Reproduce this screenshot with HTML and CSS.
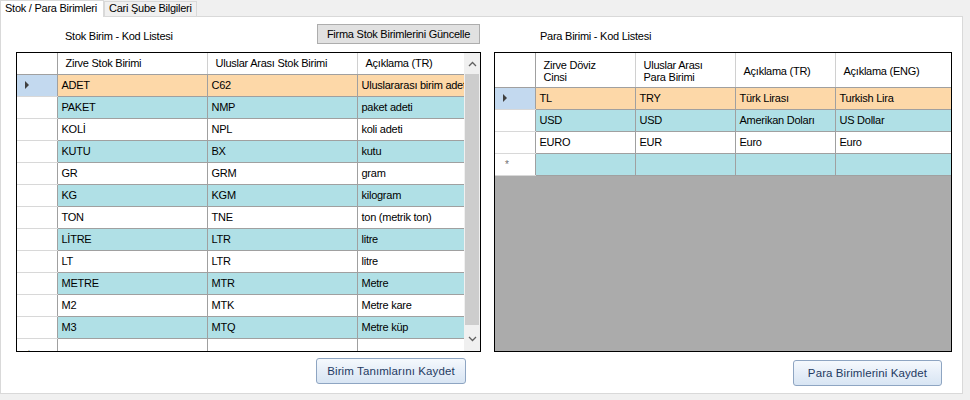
FILE: index.html
```html
<!DOCTYPE html>
<html>
<head>
<meta charset="utf-8">
<link rel="stylesheet" href="styles.css">
</head>
<body>
<div class="tabs">
  <div class="tab active">Stok / Para Birimleri</div>
  <div class="tab">Cari Şube Bilgileri</div>
</div>
<div class="page">
  <div class="col col-left">
    <div class="col-head">
      <span class="label label-left">Stok Birim - Kod Listesi</span>
      <button class="btn-flat">Firma Stok Birimlerini Güncelle</button>
    </div>
    <div class="grid grid-left">
      <div class="grid-body">
        <table class="tbl">
          <colgroup><col class="c-rh"><col class="c-150"><col class="c-150"><col></colgroup>
          <thead>
            <tr class="hrow"><th class="rh"></th><th>Zirve Stok Birimi</th><th>Uluslar Arası Stok Birimi</th><th>Açıklama (TR)</th></tr>
          </thead>
          <tbody>
            <tr class="sel"><td class="rh"><span class="tri"></span></td><td>ADET</td><td>C62</td><td>Uluslararası birim adet</td></tr>
            <tr class="blue"><td class="rh"></td><td>PAKET</td><td>NMP</td><td>paket adeti</td></tr>
            <tr><td class="rh"></td><td>KOLİ</td><td>NPL</td><td>koli adeti</td></tr>
            <tr class="blue"><td class="rh"></td><td>KUTU</td><td>BX</td><td>kutu</td></tr>
            <tr><td class="rh"></td><td>GR</td><td>GRM</td><td>gram</td></tr>
            <tr class="blue"><td class="rh"></td><td>KG</td><td>KGM</td><td>kilogram</td></tr>
            <tr><td class="rh"></td><td>TON</td><td>TNE</td><td>ton (metrik ton)</td></tr>
            <tr class="blue"><td class="rh"></td><td>LİTRE</td><td>LTR</td><td>litre</td></tr>
            <tr><td class="rh"></td><td>LT</td><td>LTR</td><td>litre</td></tr>
            <tr class="blue"><td class="rh"></td><td>METRE</td><td>MTR</td><td>Metre</td></tr>
            <tr><td class="rh"></td><td>M2</td><td>MTK</td><td>Metre kare</td></tr>
            <tr class="blue"><td class="rh"></td><td>M3</td><td>MTQ</td><td>Metre küp</td></tr>
            <tr><td class="rh star">*</td><td></td><td></td><td></td></tr>
          </tbody>
        </table>
      </div>
      <div class="vscroll">
        <div class="arrow arrow-up"><svg width="9" height="6" viewBox="0 0 9 6"><polyline points="1,5 4.5,1.5 8,5" fill="none" stroke="#606060" stroke-width="1.3"/></svg></div>
        <div class="thumb"></div>
        <div class="track"></div>
        <div class="arrow arrow-down"><svg width="9" height="6" viewBox="0 0 9 6"><polyline points="1,1 4.5,4.5 8,1" fill="none" stroke="#606060" stroke-width="1.3"/></svg></div>
      </div>
    </div>
    <div class="col-foot foot-left">
      <button class="btn-blue btn-birim">Birim Tanımlarını Kaydet</button>
    </div>
  </div>

  <div class="col col-right">
    <div class="col-head">
      <span class="label label-right">Para Birimi - Kod Listesi</span>
    </div>
    <div class="grid grid-right">
      <table class="tbl">
        <colgroup><col class="c-rh"><col class="c-100"><col class="c-100"><col class="c-100"><col></colgroup>
        <thead>
          <tr class="hrow tall"><th class="rh"></th><th>Zirve Döviz<br>Cinsi</th><th>Uluslar Arası<br>Para Birimi</th><th>Açıklama (TR)</th><th>Açıklama (ENG)</th></tr>
        </thead>
        <tbody>
          <tr class="sel"><td class="rh"><span class="tri"></span></td><td>TL</td><td>TRY</td><td>Türk Lirası</td><td>Turkish Lira</td></tr>
          <tr class="blue"><td class="rh"></td><td>USD</td><td>USD</td><td>Amerikan Doları</td><td>US Dollar</td></tr>
          <tr><td class="rh"></td><td>EURO</td><td>EUR</td><td>Euro</td><td>Euro</td></tr>
          <tr class="blue"><td class="rh star">*</td><td></td><td></td><td></td><td></td></tr>
        </tbody>
      </table>
    </div>
    <div class="col-foot foot-right">
      <button class="btn-blue btn-para">Para Birimlerini Kaydet</button>
    </div>
  </div>
</div>
</body>
</html>
```

FILE: styles.css
```css
* { box-sizing: border-box; }
body {
  margin: 0;
  width: 970px;
  height: 400px;
  overflow: hidden;
  background: #f0f0f0;
  font-family: "Liberation Sans", Arial, sans-serif;
  font-size: 11px;
  letter-spacing: -0.25px;
  color: #000;
}
.tabs {
  display: flex;
  align-items: flex-end;
  height: 16px;
  position: relative;
  z-index: 1;
}
.tab {
  height: 15px;
  line-height: 13px;
  padding: 0 4px;
  border: 1px solid #d9d9d9;
  border-bottom: none;
  background: #f0f0f0;
  white-space: nowrap;
}
.tab.active {
  height: 17px;
  line-height: 14px;
  margin-bottom: -1px;
  background: #fff;
  padding: 0 6px 0 4px;
}
.page {
  width: 963px;
  height: 378px;
  border: 1px solid #d9d9d9;
  background: #fff;
  display: flex;
  padding: 7px 0 0 15px;
}
.col { display: flex; flex-direction: column; }
.col-left { width: 465px; }
.col-right { width: 458px; margin-left: 13px; }
.col-head {
  height: 20px;
  display: flex;
  align-items: center;
  margin-bottom: 8px;
}
.label { padding-top: 3px; }
.label-left { margin-left: 49px; }
.label-right { margin-left: 46px; }
.btn-flat {
  margin-left: auto;
  margin-right: 1px;
  width: 163px;
  height: 20px;
  border: 1px solid #adadad;
  background: #e1e1e1;
  font: inherit;
  letter-spacing: inherit;
  color: #000;
  padding: 0;
}
.grid {
  height: 300px;
  border: 1px solid #000;
  overflow: hidden;
}
.grid-left { display: flex; }
.grid-body { flex: 1; overflow: hidden; }
.grid-right { background: #ababab; }
.tbl {
  width: 100%;
  table-layout: fixed;
  border-collapse: collapse;
}
.c-rh { width: 40px; }
.c-150 { width: 150px; }
.c-100 { width: 100px; }
.tbl th, .tbl td {
  padding: 0 0 0 4px;
  border-right: 1px solid #a0a0a0;
  border-bottom: 1px solid #a0a0a0;
  white-space: nowrap;
  overflow: hidden;
  text-align: left;
  vertical-align: middle;
  font-weight: normal;
  background: #fff;
}
.tbl th {
  padding-left: 8px;
  border-right-color: #d0d0d0;
  line-height: 12px;
}
.tbl tr > :last-child { border-right: none; }
.grid-left .tbl tr > :last-child { border-right: none; }
.hrow { height: 21px; }
.hrow.tall { height: 34px; }
.hrow.tall th { padding-top: 2px; }
.tbl tbody tr { height: 22px; }
.tbl .rh {
  padding: 0;
  border-right-color: #a0a0a0;
  border-bottom-color: #d8d8d8;
  background: #fff;
}
.tbl thead .rh { border-bottom-color: #a0a0a0; border-right-color: #a0a0a0; }
.tbl tr.blue td { background: #b0e0e6; }
.tbl tr.sel td { background: #fdd8a8; }
.tbl tr td.rh { background: #fff; }
.tbl tr.sel td.rh { background: #c3d9ef; }
.tri {
  display: block;
  width: 0;
  height: 0;
  margin-left: 8px;
  border-top: 4px solid transparent;
  border-bottom: 4px solid transparent;
  border-left: 4px solid #404040;
}
.star {
  color: #707070;
  padding-left: 10px !important;
  font-size: 10px;
  vertical-align: middle;
}
.grid-left .star { vertical-align: bottom; }
.vscroll {
  width: 16px;
  display: flex;
  flex-direction: column;
  background: #f0f0f0;
}
.arrow {
  height: 21px;
  display: flex;
  align-items: center;
  justify-content: center;
}
.thumb {
  height: 251px;
  margin: 0 1px;
  background: #cdcdcd;
}
.track { flex: 1; }
.arrow-down { height: 24px; }
.col-foot {
  display: flex;
  justify-content: flex-end;
}
.foot-left { margin-top: 6px; padding-right: 15px; }
.foot-right { margin-top: 8px; padding-right: 10px; }
.btn-blue {
  height: 26px;
  border: 1px solid #8ea5c2;
  border-radius: 3px;
  background: linear-gradient(#f5f9fd, #e6eef8 50%, #d8e5f3);
  color: #1f3a62;
  font-family: "Liberation Sans", Arial, sans-serif;
  font-size: 11.5px;
  letter-spacing: 0.1px;
  padding: 0;
}
.btn-birim { width: 150px; }
.btn-para { width: 149px; }
```
